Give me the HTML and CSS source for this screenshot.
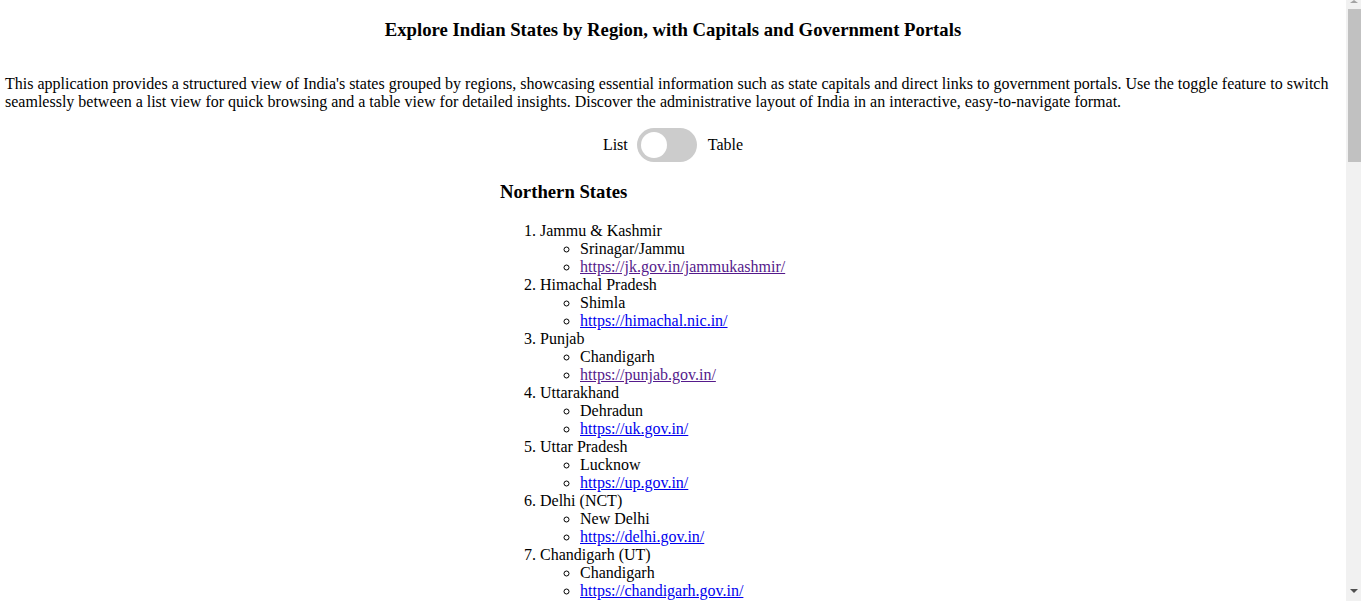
FILE: index.html
```html
<!DOCTYPE html>
<html lang="en">
<head>
<meta charset="utf-8">
<title>Explore Indian States by Region</title>
<link rel="stylesheet" href="styles.css">
</head>
<body>
<header class="page-header">
  <h1 class="title">Explore Indian States by Region, with Capitals and Government Portals</h1>
</header>
<p class="intro">This application provides a structured view of India's states grouped by regions, showcasing essential information such as state capitals and direct links to government portals. Use the toggle feature to switch seamlessly between a list view for quick browsing and a table view for detailed insights. Discover the administrative layout of India in an interactive, easy-to-navigate format.</p>
<div class="toggle-row">
  <span class="toggle-label">List</span>
  <label class="switch"><input type="checkbox"><span class="slider"></span></label>
  <span class="toggle-label">Table</span>
</div>
<main class="regions">
  <section class="region">
    <h2 class="region-title">Northern States</h2>
    <ol class="states">
      <li>Jammu &amp; Kashmir<ul class="details"><li>Srinagar/Jammu</li><li><a class="visited" href="#">https://jk.gov.in/jammukashmir/</a></li></ul></li>
      <li>Himachal Pradesh<ul class="details"><li>Shimla</li><li><a href="#">https://himachal.nic.in/</a></li></ul></li>
      <li>Punjab<ul class="details"><li>Chandigarh</li><li><a class="visited" href="#">https://punjab.gov.in/</a></li></ul></li>
      <li>Uttarakhand<ul class="details"><li>Dehradun</li><li><a href="#">https://uk.gov.in/</a></li></ul></li>
      <li>Uttar Pradesh<ul class="details"><li>Lucknow</li><li><a href="#">https://up.gov.in/</a></li></ul></li>
      <li>Delhi (NCT)<ul class="details"><li>New Delhi</li><li><a href="#">https://delhi.gov.in/</a></li></ul></li>
      <li>Chandigarh (UT)<ul class="details"><li>Chandigarh</li><li><a href="#">https://chandigarh.gov.in/</a></li></ul></li>
      <li>Haryana<ul class="details"><li>Chandigarh</li><li><a href="#">https://haryana.gov.in/</a></li></ul></li>
    </ol>
  </section>
  <section class="region">
    <h2 class="region-title">Southern States</h2>
    <ol class="states">
      <li>Andhra Pradesh<ul class="details"><li>Amaravati</li><li><a href="#">https://ap.gov.in/</a></li></ul></li>
      <li>Karnataka<ul class="details"><li>Bengaluru</li><li><a href="#">https://karnataka.gov.in/</a></li></ul></li>
      <li>Kerala<ul class="details"><li>Thiruvananthapuram</li><li><a href="#">https://kerala.gov.in/</a></li></ul></li>
      <li>Tamil Nadu<ul class="details"><li>Chennai</li><li><a href="#">https://tn.gov.in/</a></li></ul></li>
      <li>Telangana<ul class="details"><li>Hyderabad</li><li><a href="#">https://telangana.gov.in/</a></li></ul></li>
    </ol>
  </section>
  <section class="region">
    <h2 class="region-title">Eastern States</h2>
    <ol class="states">
      <li>Bihar<ul class="details"><li>Patna</li><li><a href="#">https://state.bihar.gov.in/</a></li></ul></li>
      <li>Jharkhand<ul class="details"><li>Ranchi</li><li><a href="#">https://jharkhand.gov.in/</a></li></ul></li>
      <li>Odisha<ul class="details"><li>Bhubaneswar</li><li><a href="#">https://odisha.gov.in/</a></li></ul></li>
      <li>West Bengal<ul class="details"><li>Kolkata</li><li><a href="#">https://wb.gov.in/</a></li></ul></li>
    </ol>
  </section>
  <section class="region">
    <h2 class="region-title">Western States</h2>
    <ol class="states">
      <li>Goa<ul class="details"><li>Panaji</li><li><a href="#">https://goa.gov.in/</a></li></ul></li>
      <li>Gujarat<ul class="details"><li>Gandhinagar</li><li><a href="#">https://gujaratindia.gov.in/</a></li></ul></li>
      <li>Maharashtra<ul class="details"><li>Mumbai</li><li><a href="#">https://maharashtra.gov.in/</a></li></ul></li>
      <li>Rajasthan<ul class="details"><li>Jaipur</li><li><a href="#">https://rajasthan.gov.in/</a></li></ul></li>
    </ol>
  </section>
  <section class="region">
    <h2 class="region-title">Central States</h2>
    <ol class="states">
      <li>Madhya Pradesh<ul class="details"><li>Bhopal</li><li><a href="#">https://mp.gov.in/</a></li></ul></li>
      <li>Chhattisgarh<ul class="details"><li>Raipur</li><li><a href="#">https://cgstate.gov.in/</a></li></ul></li>
    </ol>
  </section>
  <section class="region">
    <h2 class="region-title">North-Eastern States</h2>
    <ol class="states">
      <li>Arunachal Pradesh<ul class="details"><li>Itanagar</li><li><a href="#">https://arunachalpradesh.gov.in/</a></li></ul></li>
      <li>Assam<ul class="details"><li>Dispur</li><li><a href="#">https://assam.gov.in/</a></li></ul></li>
      <li>Manipur<ul class="details"><li>Imphal</li><li><a href="#">https://manipur.gov.in/</a></li></ul></li>
      <li>Meghalaya<ul class="details"><li>Shillong</li><li><a href="#">https://meghalaya.gov.in/</a></li></ul></li>
      <li>Mizoram<ul class="details"><li>Aizawl</li><li><a href="#">https://mizoram.gov.in/</a></li></ul></li>
      <li>Nagaland<ul class="details"><li>Kohima</li><li><a href="#">https://nagaland.gov.in/</a></li></ul></li>
      <li>Sikkim<ul class="details"><li>Gangtok</li><li><a href="#">https://sikkim.gov.in/</a></li></ul></li>
      <li>Tripura<ul class="details"><li>Agartala</li><li><a href="#">https://tripura.gov.in/</a></li></ul></li>
    </ol>
  </section>
</main>
<div class="scrollbar" aria-hidden="true">
  <span class="scroll-arrow scroll-arrow-up"></span>
  <span class="scroll-thumb"></span>
  <span class="scroll-arrow scroll-arrow-down"></span>
</div>
</body>
</html>
```

FILE: styles.css
```css
html, body {
  margin: 0;
  padding: 0;
  background: #ffffff;
}

body {
  font-family: "Liberation Serif", "Times New Roman", serif;
  font-size: 16px;
  line-height: 18px;
  color: #000000;
  padding-right: 15px;
}

.page-header {
  padding: 19px 0 0;
}

.title {
  margin: 0;
  font-size: 18.72px;
  line-height: 22px;
  font-weight: bold;
  text-align: center;
}

.intro {
  margin: 34px 0 17px;
  padding: 0 5px;
}

.toggle-row {
  display: flex;
  justify-content: center;
  align-items: center;
}

.toggle-label {
  display: block;
}

.switch {
  position: relative;
  display: inline-block;
  width: 60px;
  height: 34px;
  margin: 0 11px 0 9px;
}

.switch input {
  opacity: 0;
  width: 0;
  height: 0;
  margin: 0;
}

.slider {
  position: absolute;
  inset: 0;
  background: #cccccc;
  border-radius: 34px;
  cursor: pointer;
}

.slider::before {
  content: "";
  position: absolute;
  left: 4px;
  top: 4px;
  width: 26px;
  height: 26px;
  border-radius: 50%;
  background: #ffffff;
}

.regions {
  width: 346px;
  margin: 19px auto 0;
  padding-bottom: 20px;
}

.region-title {
  margin: 0 0 19px;
  font-size: 18.72px;
  line-height: 22px;
  font-weight: bold;
}

.states {
  margin: 0 0 19px;
  padding-left: 40px;
}

.details {
  margin: 0;
  padding-left: 40px;
  list-style-type: circle;
}

a {
  color: #0000ee;
}

a.visited {
  color: #551a8b;
}

/* decorative scrollbar overlay matching the reference window chrome */
.scrollbar {
  position: fixed;
  top: 0;
  right: 0;
  bottom: 0;
  width: 15px;
  background: #f1f1f1;
  display: flex;
  flex-direction: column;
  align-items: center;
}

.scroll-arrow {
  display: block;
  width: 0;
  height: 0;
  border-left: 4px solid transparent;
  border-right: 4px solid transparent;
}

.scroll-arrow-up {
  margin-top: 0;
  border-bottom: 3px solid #a3a3a3;
}

.scroll-thumb {
  display: block;
  width: 13px;
  height: 153px;
  margin-top: 6px;
  margin-left: 2px;
  background: #c1c1c1;
}

.scroll-arrow-down {
  margin-top: auto;
  margin-bottom: 8px;
  border-top: 4px solid #505050;
}
```
